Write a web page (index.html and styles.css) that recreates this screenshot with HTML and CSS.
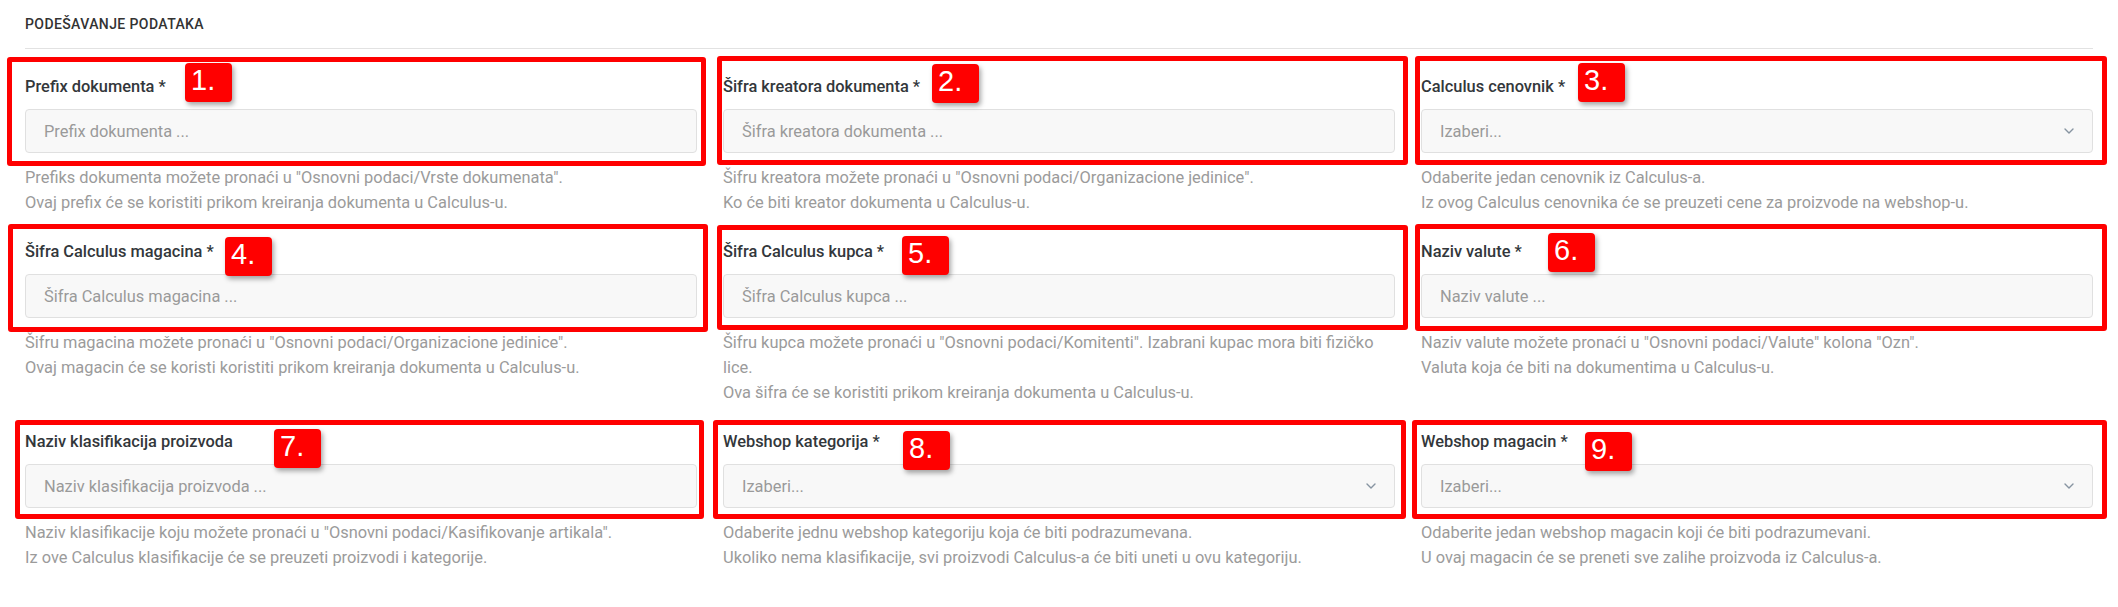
FILE: index.html
```html
<!DOCTYPE html>
<html lang="sr">
<head>
<meta charset="utf-8">
<title>Podešavanje podataka</title>
<link rel="stylesheet" href="styles.css">
</head>
<body>
<section class="page">
  <h2 class="title">PODEŠAVANJE PODATAKA</h2>
  <hr class="rule">
  <div class="grid">
    <div class="field f1">
      <label class="label">Prefix dokumenta *</label>
      <input class="input" type="text" placeholder="Prefix dokumenta ...">
      <p class="help">Prefiks dokumenta možete pronaći u "Osnovni podaci/Vrste dokumenata".<br>Ovaj prefix će se koristiti prikom kreiranja dokumenta u Calculus-u.</p>
      <span class="mark"></span><span class="badge">1.</span>
    </div>
    <div class="field f2">
      <label class="label">Šifra kreatora dokumenta *</label>
      <input class="input" type="text" placeholder="Šifra kreatora dokumenta ...">
      <p class="help">Šifru kreatora možete pronaći u "Osnovni podaci/Organizacione jedinice".<br>Ko će biti kreator dokumenta u Calculus-u.</p>
      <span class="mark"></span><span class="badge">2.</span>
    </div>
    <div class="field f3">
      <label class="label">Calculus cenovnik *</label>
      <div class="input select"><span class="ph">Izaberi...</span><svg class="chev" width="10" height="6" viewBox="0 0 10 6"><path d="M1 1l4 4 4-4" fill="none" stroke="#8794a1" stroke-width="1.4" stroke-linecap="round" stroke-linejoin="round"/></svg></div>
      <p class="help">Odaberite jedan cenovnik iz Calculus-a.<br>Iz ovog Calculus cenovnika će se preuzeti cene za proizvode na webshop-u.</p>
      <span class="mark"></span><span class="badge">3.</span>
    </div>
    <div class="field f4">
      <label class="label">Šifra Calculus magacina *</label>
      <input class="input" type="text" placeholder="Šifra Calculus magacina ...">
      <p class="help">Šifru magacina možete pronaći u "Osnovni podaci/Organizacione jedinice".<br>Ovaj magacin će se koristi koristiti prikom kreiranja dokumenta u Calculus-u.</p>
      <span class="mark"></span><span class="badge">4.</span>
    </div>
    <div class="field f5">
      <label class="label">Šifra Calculus kupca *</label>
      <input class="input" type="text" placeholder="Šifra Calculus kupca ...">
      <p class="help">Šifru kupca možete pronaći u "Osnovni podaci/Komitenti". Izabrani kupac mora biti fizičko lice.<br>Ova šifra će se koristiti prikom kreiranja dokumenta u Calculus-u.</p>
      <span class="mark"></span><span class="badge">5.</span>
    </div>
    <div class="field f6">
      <label class="label">Naziv valute *</label>
      <input class="input" type="text" placeholder="Naziv valute ...">
      <p class="help">Naziv valute možete pronaći u "Osnovni podaci/Valute" kolona "Ozn".<br>Valuta koja će biti na dokumentima u Calculus-u.</p>
      <span class="mark"></span><span class="badge">6.</span>
    </div>
    <div class="field f7">
      <label class="label">Naziv klasifikacija proizvoda</label>
      <input class="input" type="text" placeholder="Naziv klasifikacija proizvoda ...">
      <p class="help">Naziv klasifikacije koju možete pronaći u "Osnovni podaci/Kasifikovanje artikala".<br>Iz ove Calculus klasifikacije će se preuzeti proizvodi i kategorije.</p>
      <span class="mark"></span><span class="badge">7.</span>
    </div>
    <div class="field f8">
      <label class="label">Webshop kategorija *</label>
      <div class="input select"><span class="ph">Izaberi...</span><svg class="chev" width="10" height="6" viewBox="0 0 10 6"><path d="M1 1l4 4 4-4" fill="none" stroke="#8794a1" stroke-width="1.4" stroke-linecap="round" stroke-linejoin="round"/></svg></div>
      <p class="help">Odaberite jednu webshop kategoriju koja će biti podrazumevana.<br>Ukoliko nema klasifikacije, svi proizvodi Calculus-a će biti uneti u ovu kategoriju.</p>
      <span class="mark"></span><span class="badge">8.</span>
    </div>
    <div class="field f9">
      <label class="label">Webshop magacin *</label>
      <div class="input select"><span class="ph">Izaberi...</span><svg class="chev" width="10" height="6" viewBox="0 0 10 6"><path d="M1 1l4 4 4-4" fill="none" stroke="#8794a1" stroke-width="1.4" stroke-linecap="round" stroke-linejoin="round"/></svg></div>
      <p class="help">Odaberite jedan webshop magacin koji će biti podrazumevani.<br>U ovaj magacin će se preneti sve zalihe proizvoda iz Calculus-a.</p>
      <span class="mark"></span><span class="badge">9.</span>
    </div>
  </div>
</section>
</body>
</html>
```
FILE: styles.css
```css
* { box-sizing: border-box; }
html, body { margin: 0; padding: 0; background: #ffffff; }
body { font-family: Roboto, "Liberation Sans", Arial, sans-serif; color: #333333; }

.page { padding: 13.5px 25px 0 25px; }

.title {
  margin: 0;
  font-size: 14px;
  line-height: 20px;
  font-weight: 500;
  letter-spacing: 0.4px;
  color: #333333;
}

.rule {
  margin: 14.5px 0 26px 0;
  border: 0;
  border-top: 1px solid #e2e2e2;
  height: 0;
}

.grid {
  display: grid;
  grid-template-columns: repeat(3, 1fr);
  column-gap: 26px;
  row-gap: 25px;
}

.field { position: relative; }

.label {
  display: block;
  font-size: 16.4px;
  line-height: 24px;
  font-weight: 500;
  color: #33373b;
  margin-bottom: 10px;
}

.input {
  display: flex;
  align-items: center;
  width: 100%;
  height: 44px;
  margin: 0;
  padding: 0 18px;
  border: 1px solid #e0e0e0;
  border-radius: 4px;
  background: #f8f8f8;
  font-family: Roboto, "Liberation Sans", Arial, sans-serif;
  font-size: 16.4px;
  color: #333333;
  outline: none;
}
.input::placeholder { color: #9a9a9a; opacity: 1; }

.select { justify-content: space-between; padding-right: 18px; }
.ph { color: #9a9a9a; font-size: 16.4px; }
.chev { display: block; }

.help {
  margin: 12px 0 0 0;
  font-size: 16.4px;
  line-height: 25px;
  color: #9b9b9b;
}

/* annotation overlays */
.mark {
  position: absolute;
  border: 5px solid #ff0000;
  border-radius: 3px;
  pointer-events: none;
}
.badge {
  position: absolute;
  width: 47px;
  height: 39px;
  padding: 0 0 5px 6px;
  background: #ff0000;
  border-radius: 4px;
  box-shadow: 2px 3px 5px rgba(0, 0, 0, 0.35);
  color: #ffffff;
  font-family: "Liberation Sans", Arial, sans-serif;
  font-size: 29px;
  line-height: 34px;
}

.f1 .mark { left: -18px; top: -18px; width: 699px; height: 109px; }
.f1 .badge { left: 160px; top: -12px; }
.f2 .mark { left: -6px; top: -19px; width: 691px; height: 109px; }
.f2 .badge { left: 209px; top: -11px; }
.f3 .mark { left: -6px; top: -19px; width: 692px; height: 109px; }
.f3 .badge { left: 157px; top: -12px; }
.f4 .mark { left: -17px; top: -16px; width: 700px; height: 108px; }
.f4 .badge { left: 200px; top: -3px; }
.f5 .mark { left: -6px; top: -15px; width: 691px; height: 105px; }
.f5 .badge { left: 179px; top: -4px; }
.f6 .mark { left: -6px; top: -16px; width: 692px; height: 107px; }
.f6 .badge { left: 127px; top: -7px; }
.f7 .mark { left: -10px; top: -10px; width: 689px; height: 99px; }
.f7 .badge { left: 249px; top: -1px; }
.f8 .mark { left: -10px; top: -10px; width: 693px; height: 99px; }
.f8 .badge { left: 180px; top: 1px; }
.f9 .mark { left: -9px; top: -10px; width: 695px; height: 99px; }
.f9 .badge { left: 164px; top: 2px; }
```
